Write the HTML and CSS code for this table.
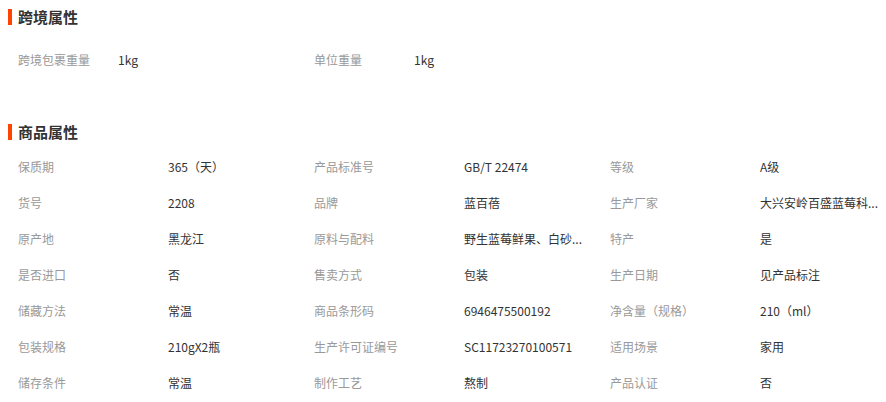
FILE: index.html
```html
<!DOCTYPE html>
<html lang="zh-CN">
<head>
    <meta charset="UTF-8">
    <title>商品属性</title>
    <link rel="stylesheet" href="styles.css">
</head>
<body>
    <div class="attr-box cross">
        <h3 class="attr-title">跨境属性</h3>
        <ul class="attr-list">
            <li><span class="attr-name">跨境包裹重量</span><span class="attr-value">1kg</span></li>
            <li><span class="attr-name">单位重量</span><span class="attr-value">1kg</span></li>
        </ul>
    </div>
    <div class="attr-box goods">
        <h3 class="attr-title">商品属性</h3>
        <ul class="attr-list">
            <li><span class="attr-name">保质期</span><span class="attr-value">365（天）</span></li>
            <li><span class="attr-name">产品标准号</span><span class="attr-value">GB/T 22474</span></li>
            <li><span class="attr-name">等级</span><span class="attr-value">A级</span></li>
            <li><span class="attr-name">货号</span><span class="attr-value">2208</span></li>
            <li><span class="attr-name">品牌</span><span class="attr-value">蓝百蓓</span></li>
            <li><span class="attr-name">生产厂家</span><span class="attr-value">大兴安岭百盛蓝莓科...</span></li>
            <li><span class="attr-name">原产地</span><span class="attr-value">黑龙江</span></li>
            <li><span class="attr-name">原料与配料</span><span class="attr-value">野生蓝莓鲜果、白砂...</span></li>
            <li><span class="attr-name">特产</span><span class="attr-value">是</span></li>
            <li><span class="attr-name">是否进口</span><span class="attr-value">否</span></li>
            <li><span class="attr-name">售卖方式</span><span class="attr-value">包装</span></li>
            <li><span class="attr-name">生产日期</span><span class="attr-value">见产品标注</span></li>
            <li><span class="attr-name">储藏方法</span><span class="attr-value">常温</span></li>
            <li><span class="attr-name">商品条形码</span><span class="attr-value">6946475500192</span></li>
            <li><span class="attr-name">净含量（规格）</span><span class="attr-value">210（ml）</span></li>
            <li><span class="attr-name">包装规格</span><span class="attr-value">210gX2瓶</span></li>
            <li><span class="attr-name">生产许可证编号</span><span class="attr-value">SC11723270100571</span></li>
            <li><span class="attr-name">适用场景</span><span class="attr-value">家用</span></li>
            <li><span class="attr-name">储存条件</span><span class="attr-value">常温</span></li>
            <li><span class="attr-name">制作工艺</span><span class="attr-value">熬制</span></li>
            <li><span class="attr-name">产品认证</span><span class="attr-value">否</span></li>
        </ul>
    </div>
</body>
</html>
```

FILE: styles.css
```css
body {
    margin: 0;
    padding: 0;
    background-color: #fff;
    color: #333;
    font-family: "Noto Sans CJK SC", "Liberation Sans", sans-serif;
    font-size: 12px;
    overflow: hidden;
}
.attr-title {
    margin: 9px 0 0 8px;
    padding-left: 6px;
    border-left: 4px solid #ff4400;
    height: 16px;
    line-height: 16px;
    font-size: 15px;
    font-weight: bold;
    color: #333;
}
.attr-list {
    list-style: none;
    margin: 17px 0 0;
    padding: 0 0 0 18px;
    display: grid;
    grid-template-columns: repeat(3, 296px);
}
.attr-list li {
    display: flex;
    height: 36px;
    line-height: 36px;
}
.attr-name {
    width: 100px;
    flex-shrink: 0;
    color: #999;
}
.attr-value {
    width: 130px;
    white-space: nowrap;
    color: #333;
}
.goods .attr-title {
    margin-top: 46px;
}
.goods .attr-list {
    margin-top: 9px;
}
.goods .attr-name {
    width: 150px;
}
```
